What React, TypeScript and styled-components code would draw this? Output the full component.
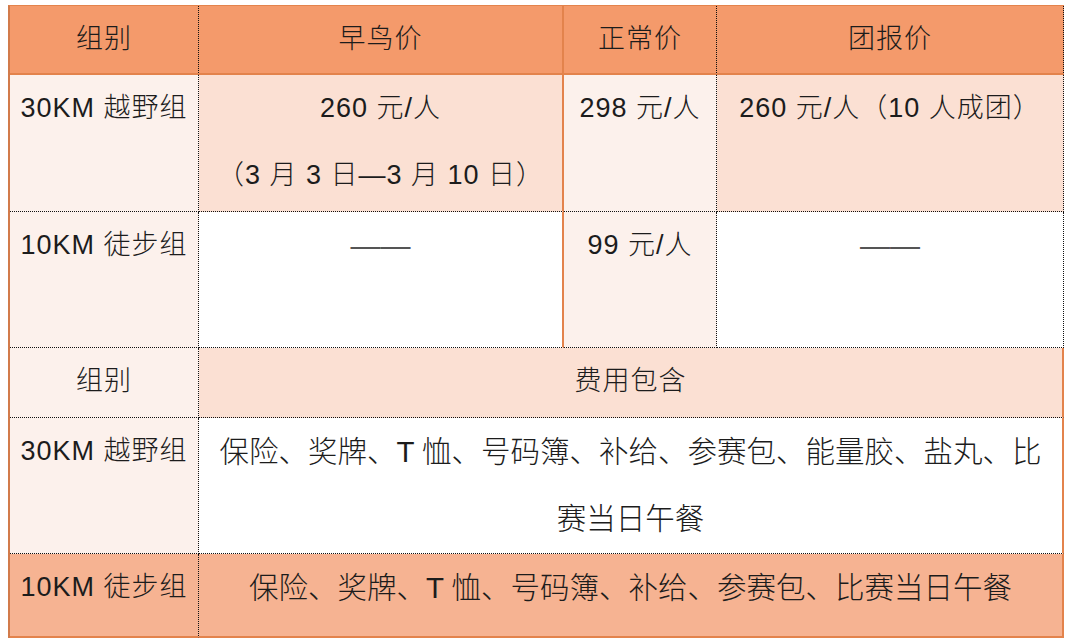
import React from 'react';
import styled, { createGlobalStyle } from 'styled-components';

const GlobalStyle = createGlobalStyle`
  html, body {
    margin: 0;
    padding: 0;
    background: #ffffff;
  }
  * {
    box-sizing: border-box;
  }
`;

const ORANGE = '#e3834c';
const DOT = '1px dotted #111';

type Edge = 'dot' | 'solid' | 'none';

const edge = (e: Edge) => (e === 'dot' ? DOT : e === 'solid' ? `2px solid ${ORANGE}` : 'none');

const Page = styled.div`
  padding: 5px 0 0 8px;
  width: 1070px;
  height: 642px;
  overflow: hidden;
`;

const Table = styled.div`
  display: grid;
  width: 1056px;
  grid-template-columns: 189px 365px 153px 1fr;
  grid-template-rows: 69px 137px 136px 70px 136px 84px;
  border-top: 1px solid ${ORANGE};
  border-left: 2px solid #d27b4b;
  font-family: 'Liberation Sans', 'Noto Sans CJK SC Light', 'Noto Sans CJK SC DemiLight', 'Noto Sans CJK SC', sans-serif;
  color: #1c1c1c;
`;

const Cell = styled.div<{ $bg: string; $right: Edge; $bottom: Edge; $span?: number; $big?: boolean }>`
  grid-column: span ${(p) => p.$span || 1};
  background: ${(p) => p.$bg};
  border-right: ${(p) => edge(p.$right)};
  border-bottom: ${(p) => edge(p.$bottom)};
  text-align: center;
  font-size: ${(p) => (p.$big ? '29.5px' : '27px')};
  font-weight: 300;
  letter-spacing: ${(p) => (p.$big ? '0' : '1px')};
  line-height: 67px;
  white-space: nowrap;
`;

const Dash = styled.span`
  color: #555;
  letter-spacing: 0;
  font-size: 30px;
`;

const HEAD = '#f49a6b';
const PEACH = '#fbe0d3';
const LIGHT = '#fcf1ec';
const WHITE = '#ffffff';
const SALMON = '#f6b392';

export default function App() {
  return (
    <>
      <GlobalStyle />
      <Page>
        <Table>
          <Cell $bg={HEAD} $right="dot" $bottom="solid">组别</Cell>
          <Cell $bg={HEAD} $right="solid" $bottom="solid">早鸟价</Cell>
          <Cell $bg={HEAD} $right="dot" $bottom="solid">正常价</Cell>
          <Cell $bg={HEAD} $right="dot" $bottom="solid">团报价</Cell>

          <Cell $bg={LIGHT} $right="dot" $bottom="dot">30KM 越野组</Cell>
          <Cell $bg={PEACH} $right="solid" $bottom="dot">
            260 元/人
            <br />
            （3 月 3 日—3 月 10 日）
          </Cell>
          <Cell $bg={LIGHT} $right="dot" $bottom="dot">298 元/人</Cell>
          <Cell $bg={PEACH} $right="dot" $bottom="dot">260 元/人（10 人成团）</Cell>

          <Cell $bg={LIGHT} $right="dot" $bottom="dot">10KM 徒步组</Cell>
          <Cell $bg={WHITE} $right="solid" $bottom="dot"><Dash>——</Dash></Cell>
          <Cell $bg={LIGHT} $right="dot" $bottom="dot">99 元/人</Cell>
          <Cell $bg={WHITE} $right="dot" $bottom="dot"><Dash>——</Dash></Cell>

          <Cell $bg={LIGHT} $right="dot" $bottom="dot">组别</Cell>
          <Cell $bg={PEACH} $right="solid" $bottom="dot" $span={3}>费用包含</Cell>

          <Cell $bg={LIGHT} $right="dot" $bottom="dot">30KM 越野组</Cell>
          <Cell $bg={WHITE} $right="solid" $bottom="dot" $span={3} $big>
            保险、奖牌、T 恤、号码簿、补给、参赛包、能量胶、盐丸、比
            <br />
            赛当日午餐
          </Cell>

          <Cell $bg={SALMON} $right="dot" $bottom="solid">10KM 徒步组</Cell>
          <Cell $bg={SALMON} $right="solid" $bottom="solid" $span={3} $big>
            保险、奖牌、T 恤、号码簿、补给、参赛包、比赛当日午餐
          </Cell>
        </Table>
      </Page>
    </>
  );
}
